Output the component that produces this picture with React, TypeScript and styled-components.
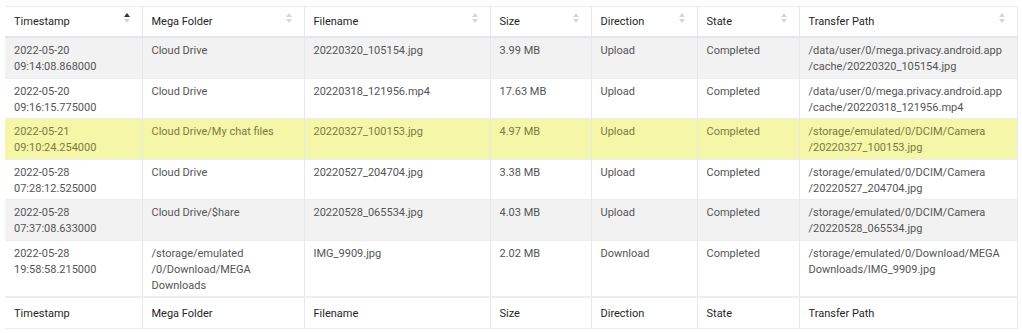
import React from 'react';
import styled, { createGlobalStyle } from 'styled-components';

const GlobalStyle = createGlobalStyle`
  html, body { margin: 0; padding: 0; background: #ffffff; }
  body { font-family: Roboto, "Noto Sans", Arial, sans-serif; }
`;

const Page = styled.div`
  padding: 6px 5px 0 5px;
`;

const Table = styled.table`
  width: 1012px;
  border-collapse: collapse;
  table-layout: fixed;
  font-size: 11px;
  line-height: 16px;
  color: #555555;
`;

const Col = styled.col<{ $w: number }>`
  width: ${(p) => p.$w}px;
`;

const HeadCell = styled.th`
  text-align: left;
  font-weight: 400;
  color: #1f1f1f;
  padding: 6px 10px 6px 9px;
  line-height: 17px;
  vertical-align: top;
  border-top: 1px solid #eaecef;
  border-bottom: 2px solid #e2e6ea;
  border-right: 1px solid #e6e8eb;
`;

const HeadInner = styled.div`
  display: flex;
  justify-content: space-between;
  align-items: flex-start;
`;

const SortIcon = styled.span`
  display: flex;
  flex-direction: column;
  align-items: center;
  gap: 2px;
  margin-top: 0px;
  margin-right: 2px;
  flex: none;
`;

const Tri = styled.span<{ $dir: 'up' | 'down'; $active?: boolean }>`
  width: 0;
  height: 0;
  border-left: 3.5px solid transparent;
  border-right: 3.5px solid transparent;
  ${(p) =>
    p.$dir === 'up'
      ? `border-bottom: 4px solid ${p.$active ? '#333333' : '#d6d6d6'};`
      : `border-top: 4px solid ${p.$active ? '#333333' : '#d6d6d6'};`}
`;

const Row = styled.tr<{ $variant: 'odd' | 'even' | 'hl' }>`
  background: ${(p) =>
    p.$variant === 'odd' ? '#f2f2f2' : p.$variant === 'hl' ? '#f6f6a9' : '#ffffff'};
  color: ${(p) => (p.$variant === 'hl' ? '#7b7b40' : '#555555')};
`;

const Cell = styled.td`
  padding: 5px 10px 2.5px 9px;
  vertical-align: top;
  border-top: 1px solid #eceef0;
  border-right: 1px solid #e6e8eb;
  word-wrap: break-word;
`;

const FootCell = styled.th`
  text-align: left;
  font-weight: 400;
  color: #1f1f1f;
  padding: 7px 10px 6px 9px;
  line-height: 17px;
  border-top: 2px solid #eceef0;
  border-bottom: 1px solid #eceef0;
  border-right: 1px solid #e6e8eb;
`;

const columns = [
  { title: 'Timestamp', w: 137, active: true },
  { title: 'Mega Folder', w: 162 },
  { title: 'Filename', w: 186 },
  { title: 'Size', w: 101 },
  { title: 'Direction', w: 106 },
  { title: 'State', w: 102 },
  { title: 'Transfer Path', w: 218 },
];

type Rec = {
  ts: [string, string];
  folder: string[];
  file: string;
  size: string;
  dir: string;
  state: string;
  path: string[];
  hl?: boolean;
};

const rows: Rec[] = [
  {
    ts: ['2022-05-20', '09:14:08.868000'],
    folder: ['Cloud Drive'],
    file: '20220320_105154.jpg',
    size: '3.99 MB',
    dir: 'Upload',
    state: 'Completed',
    path: ['/data/user/0/mega.privacy.android.app', '/cache/20220320_105154.jpg'],
  },
  {
    ts: ['2022-05-20', '09:16:15.775000'],
    folder: ['Cloud Drive'],
    file: '20220318_121956.mp4',
    size: '17.63 MB',
    dir: 'Upload',
    state: 'Completed',
    path: ['/data/user/0/mega.privacy.android.app', '/cache/20220318_121956.mp4'],
  },
  {
    ts: ['2022-05-21', '09:10:24.254000'],
    folder: ['Cloud Drive/My chat files'],
    file: '20220327_100153.jpg',
    size: '4.97 MB',
    dir: 'Upload',
    state: 'Completed',
    path: ['/storage/emulated/0/DCIM/Camera', '/20220327_100153.jpg'],
    hl: true,
  },
  {
    ts: ['2022-05-28', '07:28:12.525000'],
    folder: ['Cloud Drive'],
    file: '20220527_204704.jpg',
    size: '3.38 MB',
    dir: 'Upload',
    state: 'Completed',
    path: ['/storage/emulated/0/DCIM/Camera', '/20220527_204704.jpg'],
  },
  {
    ts: ['2022-05-28', '07:37:08.633000'],
    folder: ['Cloud Drive/$hare'],
    file: '20220528_065534.jpg',
    size: '4.03 MB',
    dir: 'Upload',
    state: 'Completed',
    path: ['/storage/emulated/0/DCIM/Camera', '/20220528_065534.jpg'],
  },
  {
    ts: ['2022-05-28', '19:58:58.215000'],
    folder: ['/storage/emulated', '/0/Download/MEGA', 'Downloads'],
    file: 'IMG_9909.jpg',
    size: '2.02 MB',
    dir: 'Download',
    state: 'Completed',
    path: ['/storage/emulated/0/Download/MEGA', 'Downloads/IMG_9909.jpg'],
  },
];

const Lines: React.FC<{ lines: string[] }> = ({ lines }) => (
  <>
    {lines.map((l, i) => (
      <React.Fragment key={i}>
        {i > 0 && <br />}
        {l}
      </React.Fragment>
    ))}
  </>
);

export default function App() {
  return (
    <>
      <GlobalStyle />
      <Page>
        <Table>
          <colgroup>
            {columns.map((c) => (
              <Col key={c.title} $w={c.w} />
            ))}
          </colgroup>
          <thead>
            <tr>
              {columns.map((c) => (
                <HeadCell key={c.title}>
                  <HeadInner>
                    <span>{c.title}</span>
                    <SortIcon>
                      <Tri $dir="up" $active={c.active} />
                      <Tri $dir="down" />
                    </SortIcon>
                  </HeadInner>
                </HeadCell>
              ))}
            </tr>
          </thead>
          <tbody>
            {rows.map((r, i) => (
              <Row key={i} $variant={r.hl ? 'hl' : i % 2 === 0 ? 'odd' : 'even'}>
                <Cell>
                  <Lines lines={r.ts} />
                </Cell>
                <Cell>
                  <Lines lines={r.folder} />
                </Cell>
                <Cell>{r.file}</Cell>
                <Cell>{r.size}</Cell>
                <Cell>{r.dir}</Cell>
                <Cell>{r.state}</Cell>
                <Cell>
                  <Lines lines={r.path} />
                </Cell>
              </Row>
            ))}
          </tbody>
          <tfoot>
            <tr>
              {columns.map((c) => (
                <FootCell key={c.title}>{c.title}</FootCell>
              ))}
            </tr>
          </tfoot>
        </Table>
      </Page>
    </>
  );
}
